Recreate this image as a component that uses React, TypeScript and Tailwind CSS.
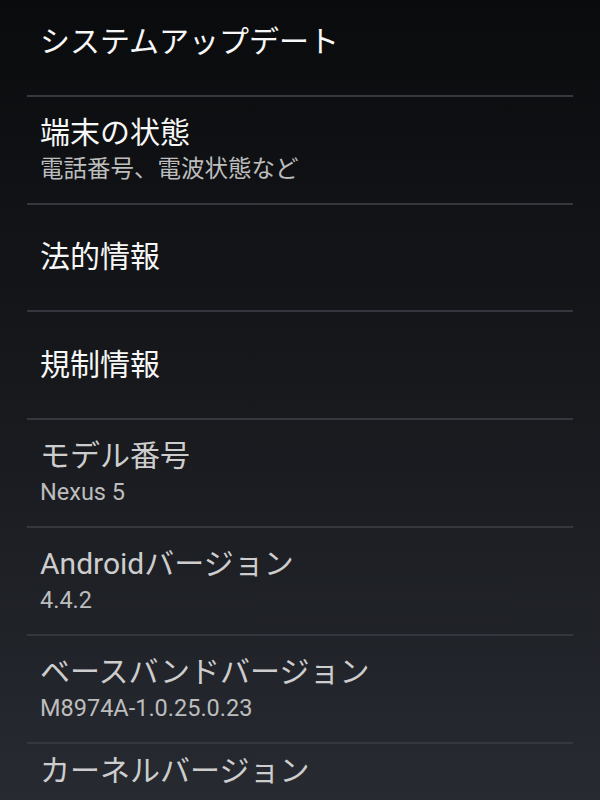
const items: { title: string; summary?: string; disabled?: boolean }[] = [
  { title: "システムアップデート" },
  { title: "端末の状態", summary: "電話番号、電波状態など" },
  { title: "法的情報" },
  { title: "規制情報" },
  { title: "モデル番号", summary: "Nexus 5", disabled: true },
  { title: "Androidバージョン", summary: "4.4.2", disabled: true },
  { title: "ベースバンドバージョン", summary: "M8974A-1.0.25.0.23", disabled: true },
];

export default function App() {
  return (
    <div
      className="w-[600px] h-[800px] overflow-hidden bg-gradient-to-b from-[#0a0b0d] via-[#17191d] to-[#272a31]"
      style={{ fontFamily: 'Roboto, "Noto Sans CJK JP", sans-serif' }}
    >
      <div className="-mt-[11px]">
        {items.map((item, i) => (
          <div key={i}>
            <div className="h-[105.8px] flex flex-col justify-center pl-[40px] pr-[27px]">
              <div
                className={`text-[30px] leading-[38px] ${item.disabled ? "text-[#cdcdcd]" : "text-[#f7f7f7]"}`}
              >
                {item.title}
              </div>
              {item.summary && (
                <div className="text-[23.5px] leading-[34px] text-[#bdbdbd]">{item.summary}</div>
              )}
            </div>
            <div className="mx-[27px] h-[2px] bg-[#34373d]" />
          </div>
        ))}
        {/* kernel row, cut off by the bottom edge */}
        <div className="pt-[8px] pl-[40px] pr-[27px]">
          <div className="text-[30px] leading-[38px] text-[#cdcdcd]">カーネルバージョン</div>
        </div>
      </div>
    </div>
  );
}
